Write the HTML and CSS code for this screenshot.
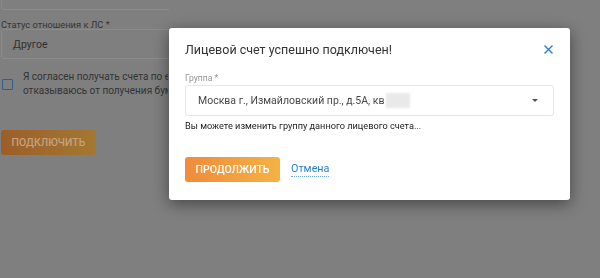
FILE: index.html
```html
<!DOCTYPE html>
<html lang="ru">
<head>
    <meta charset="UTF-8">
    <meta name="viewport" content="width=device-width, initial-scale=1.0">
    <title>Подключение лицевого счета</title>
    <link rel="stylesheet" href="styles.css">
</head>
<body>
    <div class="page">
        <div class="field field-top"></div>
        <div class="field-label">Статус отношения к ЛС *</div>
        <div class="field">Другое</div>
        <label class="agree">
            <span class="checkbox"></span>
            <span class="agree-text">Я согласен получать счета по е-mail и<br>отказываюсь от получения бумажных квитанций</span>
        </label>
        <button class="btn-connect">Подключить</button>
    </div>

    <div class="overlay">
        <div class="modal">
            <div class="modal-header">
                <h2 class="modal-title">Лицевой счет успешно подключен!</h2>
                <button class="close-btn" aria-label="Закрыть">
                    <svg width="9" height="9" viewBox="0 0 9 9">
                        <path d="M0.5 0.5 L8.5 8.5 M8.5 0.5 L0.5 8.5" stroke="#2a7fd0" stroke-width="1.4" fill="none"/>
                    </svg>
                </button>
            </div>
            <div class="modal-label">Группа *</div>
            <div class="select">
                <span class="select-value">Москва г., Измайловский пр., д.5А, кв</span>
                <span class="hidden-part"></span>
                <span class="caret"></span>
            </div>
            <div class="hint">Вы можете изменить группу данного лицевого счета...</div>
            <div class="modal-footer">
                <button class="btn-primary">Продолжить</button>
                <a href="#" class="link-cancel">Отмена</a>
            </div>
        </div>
    </div>
</body>
</html>
```

FILE: styles.css
```css
body {
    margin: 0;
    background: #7f7f7f;
    font-family: Roboto, "Liberation Sans", sans-serif;
    color: #2e2e2e;
    overflow: hidden;
}
.page {
    width: 168px;
    padding-left: 1px;
    overflow: hidden;
}
.field {
    width: 400px;
    height: 28px;
    border: 1px solid #8b8b8b;
    border-radius: 3px;
    padding-left: 11px;
    font-size: 10.5px;
    line-height: 29px;
    color: #303030;
}
.field-top {
    margin-top: -20px;
}
.field-label {
    margin-top: 13px;
    height: 6px;
    font-size: 9.3px;
    line-height: 4px;
    color: #363636;
}
.agree {
    display: flex;
    align-items: center;
    gap: 10px;
    margin-top: 11px;
    font-size: 10px;
    line-height: 14px;
    color: #333;
    white-space: nowrap;
}
.agree-text {
    width: 145px;
    overflow: hidden;
}
.checkbox {
    width: 9px;
    height: 9px;
    border: 1.5px solid #2c5f8c;
    border-radius: 1px;
    margin-left: 1px;
    flex-shrink: 0;
}
.btn-connect {
    margin-top: 32px;
    width: 95px;
    height: 25px;
    border: none;
    border-radius: 3px;
    background: linear-gradient(to right, #9c5e28, #a47831);
    color: #c1a383;
    font-family: inherit;
    font-size: 10.5px;
    font-weight: 500;
    text-transform: uppercase;
    padding: 0;
}

.overlay {
    position: fixed;
    inset: 0;
    padding: 28px 0 0 169px;
}
.modal {
    width: 369px;
    padding: 12px 16px 18px;
    background: #fff;
    border-radius: 3px;
    box-shadow: 0 4px 16px rgba(0, 0, 0, 0.45);
}
.modal-header {
    display: flex;
    justify-content: space-between;
    align-items: flex-start;
    height: 20px;
}
.modal-title {
    margin: 0;
    font-size: 12.5px;
    font-weight: 400;
    line-height: 20px;
    color: #333;
}
.close-btn {
    display: block;
    background: none;
    border: none;
    padding: 0;
    width: 9px;
    height: 9px;
    margin: 5px 1px 0 0;
}
.close-btn svg {
    display: block;
}
.modal-label {
    margin-top: 12px;
    font-size: 8.6px;
    line-height: 13px;
    color: #939393;
}
.select {
    display: flex;
    align-items: center;
    height: 29px;
    border: 1px solid #e6e6e6;
    border-radius: 3px;
    padding: 0 12px;
    font-size: 10.5px;
    color: #484848;
}
.hidden-part {
    width: 24px;
    height: 15px;
    margin-left: 2px;
    background: #e9e9e9;
    filter: blur(1px);
}
.caret {
    margin-left: auto;
    border-left: 3px solid transparent;
    border-right: 3px solid transparent;
    border-top: 3px solid #555;
    margin-right: 3px;
}
.hint {
    margin-top: 2px;
    font-size: 9.2px;
    line-height: 15px;
    color: #222;
}
.modal-footer {
    display: flex;
    align-items: center;
    gap: 11px;
    margin-top: 24px;
}
.btn-primary {
    width: 95px;
    height: 25px;
    border: none;
    border-radius: 3px;
    background: linear-gradient(to right, #f08b3b, #f4b244);
    color: #fff;
    font-family: inherit;
    font-size: 10.5px;
    font-weight: 500;
    text-transform: uppercase;
    padding: 0;
}
.link-cancel {
    font-size: 10.8px;
    color: #2a7fd0;
    text-decoration: none;
    border-bottom: 1px dotted #6aa6e0;
    line-height: 14px;
}
```
